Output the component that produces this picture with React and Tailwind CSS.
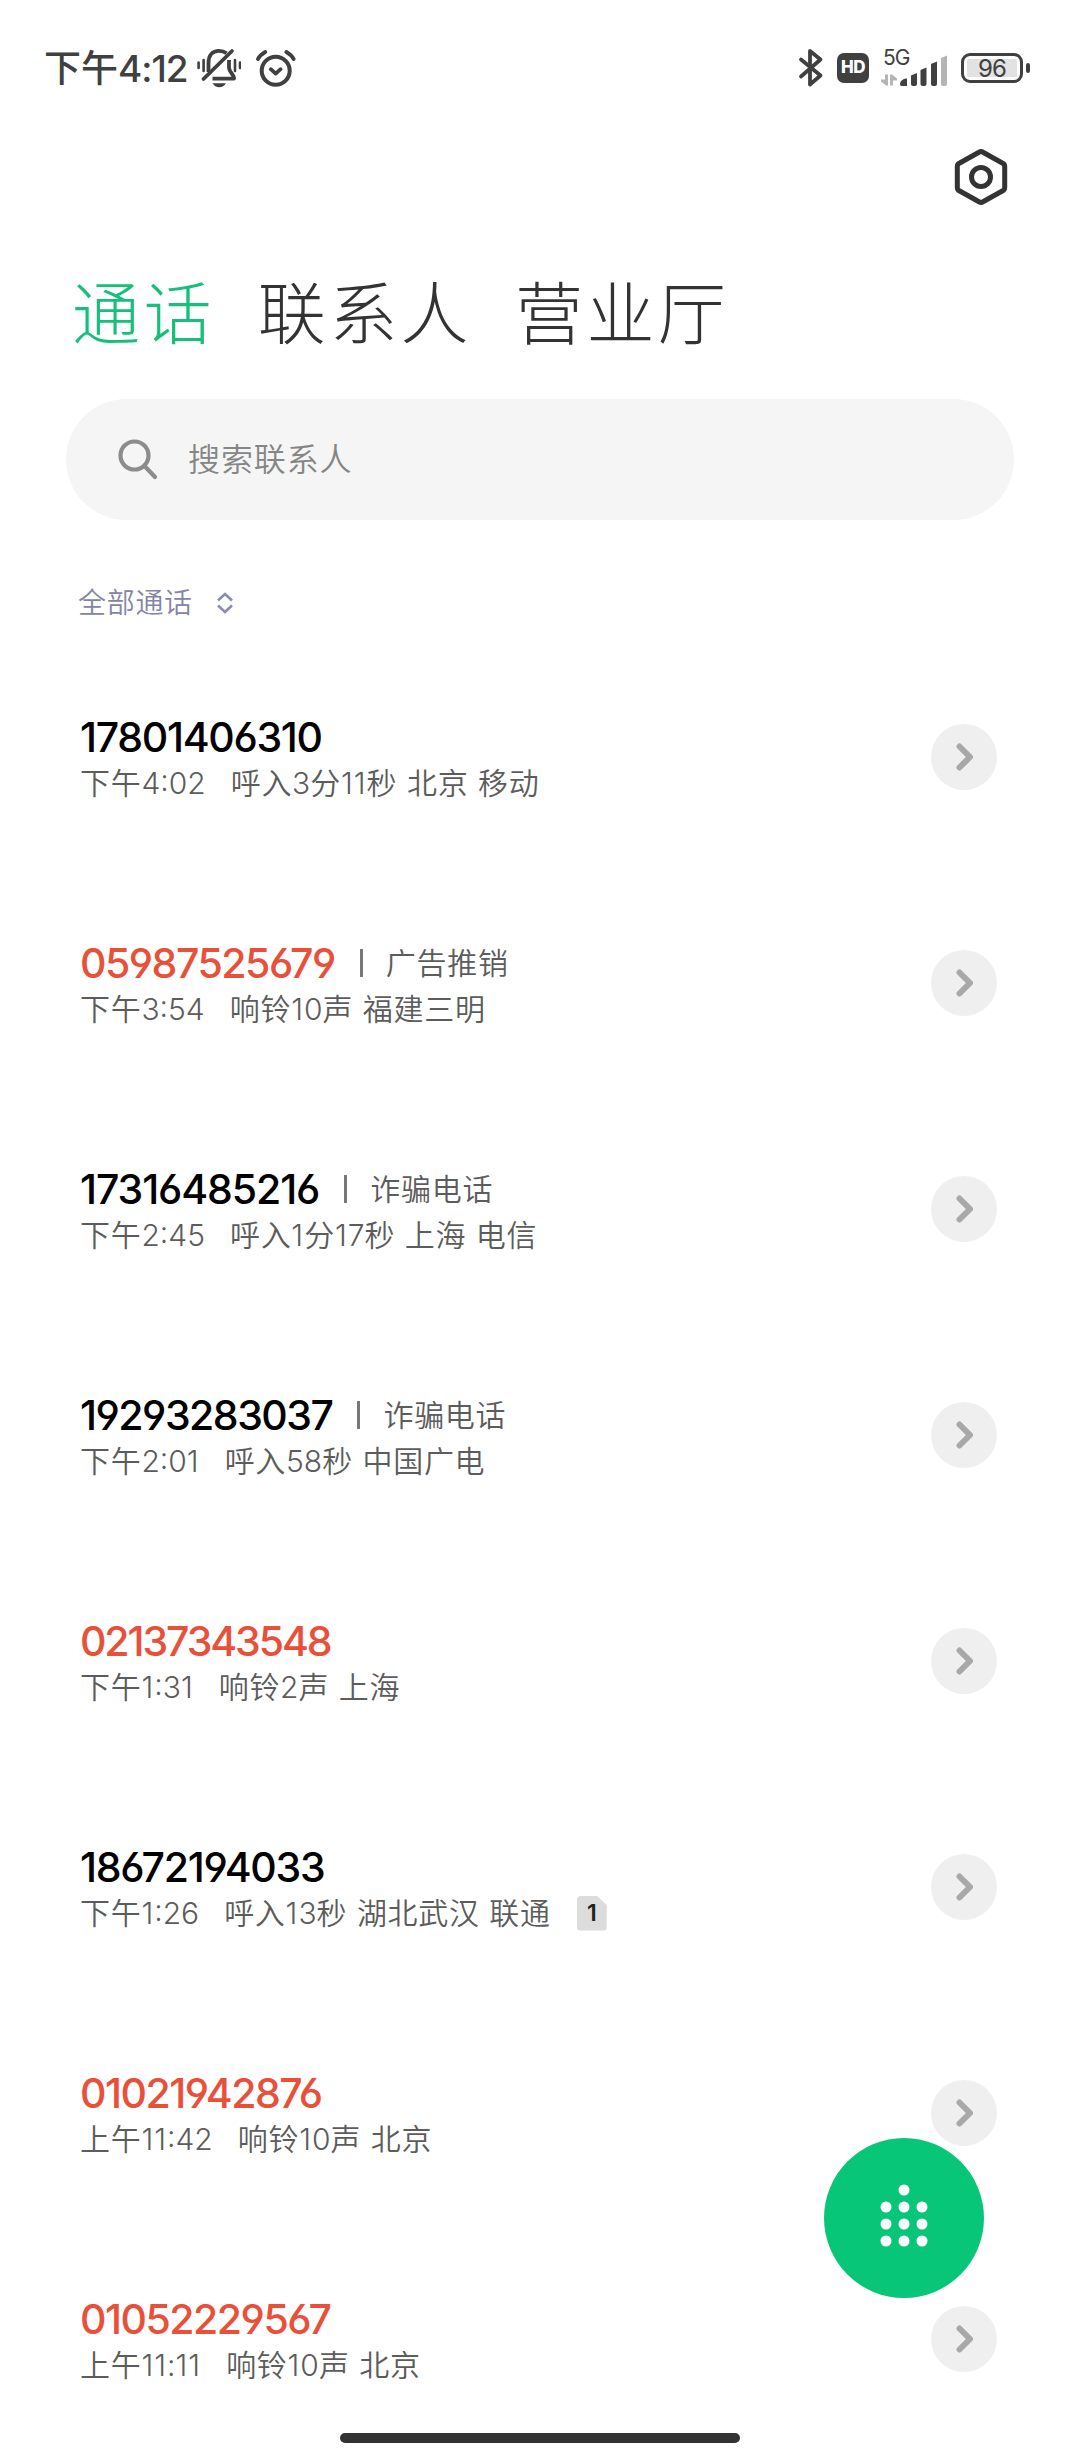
import clsx from "clsx";

const calls = [
  { number: "17801406310", spacing: "tracking-[-1.3px]", time: "下午4:02", detail: "呼入3分11秒 北京 移动" },
  { number: "05987525679", spacing: "tracking-[-1.5px]", tag: "广告推销", time: "下午3:54", detail: "响铃10声 福建三明", missed: true },
  { number: "17316485216", spacing: "tracking-[-1.1px]", tag: "诈骗电话", time: "下午2:45", detail: "呼入1分17秒 上海 电信" },
  { number: "19293283037", spacing: "tracking-[-1.5px]", tag: "诈骗电话", time: "下午2:01", detail: "呼入58秒 中国广电" },
  { number: "02137343548", spacing: "tracking-[-2.1px]", time: "下午1:31", detail: "响铃2声 上海", missed: true },
  { number: "18672194033", spacing: "tracking-[-1.3px]", time: "下午1:26", detail: "呼入13秒 湖北武汉 联通", sim: 1 },
  { number: "01021942876", spacing: "tracking-[-1.5px]", time: "上午11:42", detail: "响铃10声 北京", missed: true },
  { number: "01052229567", spacing: "tracking-[-1.5px]", time: "上午11:11", detail: "响铃10声 北京", missed: true },
];

// digits get tighter tracking than the Chinese characters, except the narrow 1
function Mixed({ text }) {
  return text.split(/(1+|[02-9:]+)/).map((part, i) => (
    <span
      key={i}
      className={clsx(/1/.test(part) && "tracking-[1px]", /[02-9:]/.test(part) && "tracking-normal")}
    >
      {part}
    </span>
  ));
}

function BellOff() {
  return (
    <svg width="44" height="40" viewBox="0 0 44 40" fill="none" stroke="#404040" strokeWidth="3.8">
      <path d="M11.5 24 V15 C11.5 7 15.5 2.8 22 2.8 C25 2.8 27.5 3.6 29.5 5.2" />
      <path d="M32 12 V19.5 C32 24 37.4 27 37 30.6 H15.5" strokeLinejoin="round" />
      <path d="M6.5 31 L35 3" strokeLinecap="round" />
      <path d="M15.5 35.2 H29 C27 38.6 24.5 39.2 22.2 39.2 C20 39.2 17.5 38.6 15.5 35.2 Z" fill="#404040" stroke="none" />
      <path d="M1.6 14.5 V20 M6.6 12 V23 M38 12 V23 M43 14.5 V20" strokeWidth="2.6" strokeLinecap="round" />
    </svg>
  );
}

function Alarm() {
  return (
    <svg width="40" height="37" viewBox="0 0 40 37" fill="none" stroke="#404040" strokeLinecap="round" strokeLinejoin="round">
      <circle cx="19.7" cy="20.8" r="14" strokeWidth="4" />
      <path d="M14.8 19.2 L19.7 23.6 L24.6 19.2" strokeWidth="3.8" />
      <path d="M2 9 C3.6 6 6 3.8 9.2 2 M37.6 9 C36 6 33.6 3.8 30.4 2" strokeWidth="3.8" />
    </svg>
  );
}

function Bluetooth() {
  return (
    <svg width="26" height="40" viewBox="0 0 26 40" fill="none" stroke="#404040" strokeWidth="3.8" strokeLinecap="round" strokeLinejoin="round">
      <path d="M3 11.5 L22.5 27.5 L12 36.5 V3 L22.5 11.5 L3 28.5" />
    </svg>
  );
}

function Signal() {
  return (
    <div className="flex h-[36px] w-[68px] flex-col justify-between">
      <span className="h-[16px] pl-[2px] text-[21px] leading-[16px] tracking-[-1px]">5G</span>
      <svg className="-mt-[11px]" width="68" height="31" viewBox="0 0 68 31" fill="#404040">
        <path d="M4 19.5 H7 V30.5 H5 L0 26.5 V24.5 H4 Z M9 30.5 V19.5 H11 L16 23.5 V25.5 H12 V30.5 Z" fill="#b5b5b5" />
        <path d="M19 29 C19 26 22 23.5 26 23.5 V31 H20.5 Q19 31 19 29 Z" />
        <path d="M30 20.5 L36 18 V29 Q36 31 34 31 H32 Q30 31 30 29 Z" />
        <path d="M39.5 15 L45.5 12.5 V29 Q45.5 31 43.5 31 H41.5 Q39.5 31 39.5 29 Z" />
        <path d="M50 9 L56 6.5 V29 Q56 31 54 31 H52 Q50 31 50 29 Z" />
        <path d="M60 3 L66 0.5 V29 Q66 31 64 31 H62 Q60 31 60 29 Z" fill="#b5b5b5" />
      </svg>
    </div>
  );
}

function Battery() {
  return (
    <div className="flex items-center gap-[3px]">
      <div className="flex h-[30px] w-[62px] rounded-[9px] border-[3px] border-[#404040] p-[3px]">
        <div className="flex flex-1 items-center justify-center rounded-[2px] bg-[#e2e2e2] pt-[2px] text-[24px] leading-none tracking-[-1px]">96</div>
      </div>
      <div className="h-[10px] w-[4px] rounded-[2px] bg-[#404040]" />
    </div>
  );
}

function StatusBar() {
  return (
    <div className="flex h-[136px] items-center pr-[50px] pl-[44px] text-[#404040]">
      <div className="text-[37px] leading-none font-medium">
        下午<span className="tracking-[-1px]">4:12</span>
      </div>
      <div className="ml-[9px]"><BellOff /></div>
      <div className="ml-[15px]"><Alarm /></div>
      <div className="ml-auto"><Bluetooth /></div>
      <div className="ml-[13px] flex h-[30px] w-[32px] items-center justify-center rounded-[7px] bg-[#404040] text-[17px] font-extrabold tracking-[-0.5px] text-white">HD</div>
      <div className="ml-[12px]"><Signal /></div>
      <div className="ml-[12px]"><Battery /></div>
    </div>
  );
}

function CallRow({ call }) {
  return (
    <div className="flex h-[226px] items-center justify-between pr-[83px] pl-[80px]">
      <div className="pt-[6px]">
        <div className="flex h-[46px] items-center">
          <span
            className={clsx(
              "text-[41px] leading-[46px] font-medium [font-feature-settings:'cv03','cv04']",
              call.spacing,
              call.missed ? "text-[#e8503a]" : "text-black"
            )}
          >
            {call.number}
          </span>
          {call.tag && (
            <>
              <span className="ml-[25px] h-[28px] w-[3px] bg-[#777]" />
              <span className="ml-[23px] text-[30px] leading-[44px] font-[350] tracking-[0.7px] text-[#5c5c5c]">{call.tag}</span>
            </>
          )}
        </div>
        <div className="flex h-[46px] items-center text-[30px] leading-[46px] font-[350] tracking-[0.7px] text-[#5c5c5c]">
          <span><Mixed text={call.time} /></span>
          <span className="ml-[25px] whitespace-pre [word-spacing:0.5px]"><Mixed text={call.detail} /></span>
          {call.sim && (
            <span className="ml-[26px] flex h-[35px] w-[30px] items-center justify-center rounded-[4px] bg-[#dcdcdc] text-[23px] leading-none font-semibold tracking-normal text-[#222] [clip-path:polygon(0_0,66%_0,100%_27%,100%_100%,0_100%)]">
              {call.sim}
            </span>
          )}
        </div>
      </div>
      <button className="flex size-[66px] items-center justify-center rounded-full bg-[#efefef]">
        <svg width="18" height="28" viewBox="0 0 18 28" fill="none" stroke="#a8a8a8" strokeWidth="6" strokeLinecap="round" strokeLinejoin="round">
          <path d="M4.5 3.5 L15 14 L4.5 24.5" />
        </svg>
      </button>
    </div>
  );
}

export default function App() {
  return (
    <div className="relative h-[2460px] w-[1080px] overflow-hidden bg-white font-['Inter','Noto_Sans_CJK_SC',sans-serif]">
      <StatusBar />

      <div className="flex h-[82px] items-center justify-end pr-[72px]">
        <svg width="54" height="58" viewBox="0 0 54 58" fill="none" stroke="#333" strokeWidth="5" strokeLinejoin="round">
          <path d="M25 4.2 Q27 3 29 4.2 L48.7 15.2 Q50.7 16.4 50.7 18.6 V39.4 Q50.7 41.6 48.7 42.8 L29 53.8 Q27 55 25 53.8 L5.3 42.8 Q3.3 41.6 3.3 39.4 V18.6 Q3.3 16.4 5.3 15.2 Z" />
          <circle cx="27" cy="29" r="9.5" />
        </svg>
      </div>

      <div className="flex h-[181px] items-center gap-[43px] pt-[10px] pl-[72px] text-[68px] leading-none font-light tracking-[3.4px] text-[#333]">
        <span className="text-[#16c07a]">通话</span>
        <span>联系人</span>
        <span>营业厅</span>
      </div>

      <div className="mx-[66px] flex h-[121px] items-center rounded-full bg-[#f5f5f5] pl-[52px]">
        <svg width="42" height="42" viewBox="0 0 42 42" fill="none" stroke="#8c8c8c" strokeWidth="4.2" strokeLinecap="round">
          <circle cx="16.5" cy="16.5" r="14" />
          <path d="M27 27.5 L37 38" />
        </svg>
        <span className="ml-[28px] pt-px text-[32px] font-[350] tracking-[0.9px] text-[#858585]">搜索联系人</span>
      </div>

      <div className="flex h-[124px] items-center gap-[24px] pt-[41px] pl-[78px]">
        <span className="text-[28px] font-[350] tracking-[0.7px] text-[#8385a6]">全部通话</span>
        <svg width="16" height="22" viewBox="0 0 16 22" fill="none" stroke="#8a8cb0" strokeWidth="2.6">
          <path d="M1 8.5 L8 2 L15 8.5 M1 13.5 L8 20 L15 13.5" />
        </svg>
      </div>

      <div>
        {calls.map((call) => (
          <CallRow key={call.number} call={call} />
        ))}
      </div>

      <button className="absolute top-[2138px] left-[824px] flex size-[160px] items-center justify-center rounded-full bg-[#08c677]">
        <svg width="48" height="68" viewBox="0 0 48 68" fill="#fff">
          <circle cx="24" cy="6" r="5.5" />
          {[23, 40, 57].map((y) =>
            [6, 24, 42].map((x) => <circle key={x + "-" + y} cx={x} cy={y} r="5.5" />)
          )}
        </svg>
      </button>

      <div className="absolute bottom-[17px] left-[340px] h-[10px] w-[400px] rounded-full bg-[#333]" />
    </div>
  );
}
